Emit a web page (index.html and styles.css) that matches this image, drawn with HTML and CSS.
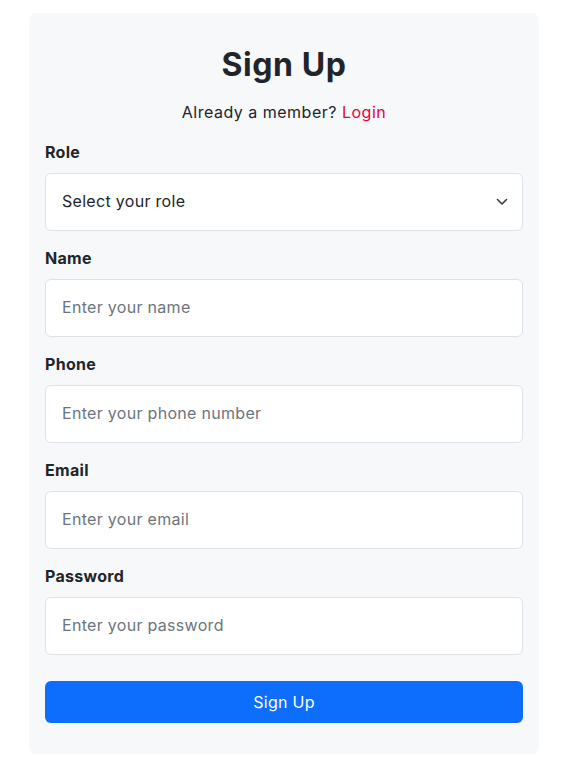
FILE: index.html
```html
<!DOCTYPE html>
<html>
<head>
<meta charset="utf-8">
<link rel="stylesheet" href="styles.css">
</head>
<body>
<div class="card">
  <h1 class="title">Sign Up</h1>
  <p class="sub">Already a member? <a class="login" href="#">Login</a></p>
  <form class="form">
    <div class="field">
      <label class="label">Role</label>
      <div class="select-wrap">
        <select class="control select">
          <option>Select your role</option>
        </select>
        <svg class="chev" width="12" height="8" viewBox="0 0 12 8"><path d="M1.5 1.5 L6 6 L10.5 1.5" fill="none" stroke="#343a40" stroke-width="1.6" stroke-linecap="round" stroke-linejoin="round"/></svg>
      </div>
    </div>
    <div class="field">
      <label class="label">Name</label>
      <input class="control" type="text" placeholder="Enter your name">
    </div>
    <div class="field">
      <label class="label">Phone</label>
      <input class="control" type="text" placeholder="Enter your phone number">
    </div>
    <div class="field">
      <label class="label">Email</label>
      <input class="control" type="text" placeholder="Enter your email">
    </div>
    <div class="field">
      <label class="label">Password</label>
      <input class="control" type="password" placeholder="Enter your password">
    </div>
    <button class="btn" type="button">Sign Up</button>
  </form>
</div>
</body>
</html>
```

FILE: styles.css
```css
* { box-sizing: border-box; }
body {
  margin: 0;
  background: #ffffff;
  font-family: "Inter", "Noto Sans", sans-serif;
  color: #212529;
  letter-spacing: 0.3px;
}
.card {
  margin: 13px 0 0 29px;
  width: 510px;
  background: #f7f8fa;
  border-radius: 7px;
  padding: 33px 16px 31px;
}
.title {
  margin: 0;
  text-align: center;
  font-size: 32px;
  line-height: 38px;
  font-weight: 700;
  color: #212529;
  letter-spacing: 0.6px;
}
.sub {
  margin: 16px 0 0;
  text-align: center;
  font-size: 16px;
  line-height: 24px;
  color: #212529;
  letter-spacing: 0.5px;
}
.login {
  color: #e8003f;
  text-decoration: none;
}
.form {
  margin-top: 16px;
  display: flex;
  flex-direction: column;
}
.field {
  display: flex;
  flex-direction: column;
  margin-bottom: 15px;
}
.label {
  font-size: 16px;
  line-height: 24px;
  font-weight: 700;
  margin-bottom: 9px;
}
.select-wrap { position: relative; }
.control {
  width: 100%;
  height: 58px;
  border: 1px solid #dee2e6;
  border-radius: 6px;
  background: #ffffff;
  padding: 0 16px 2px;
  font-family: inherit;
  font-size: 16px;
  letter-spacing: 0.3px;
  color: #212529;
  outline: none;
}
.control::placeholder { color: #6c757d; }
.select {
  appearance: none;
  -webkit-appearance: none;
}
.chev {
  position: absolute;
  right: 15px;
  top: 25px;
  pointer-events: none;
}
.btn {
  margin-top: 11px;
  height: 42px;
  border: none;
  border-radius: 6px;
  background: #0d6efd;
  color: #ffffff;
  font-family: inherit;
  font-size: 16px;
  letter-spacing: 0.3px;
}
```
